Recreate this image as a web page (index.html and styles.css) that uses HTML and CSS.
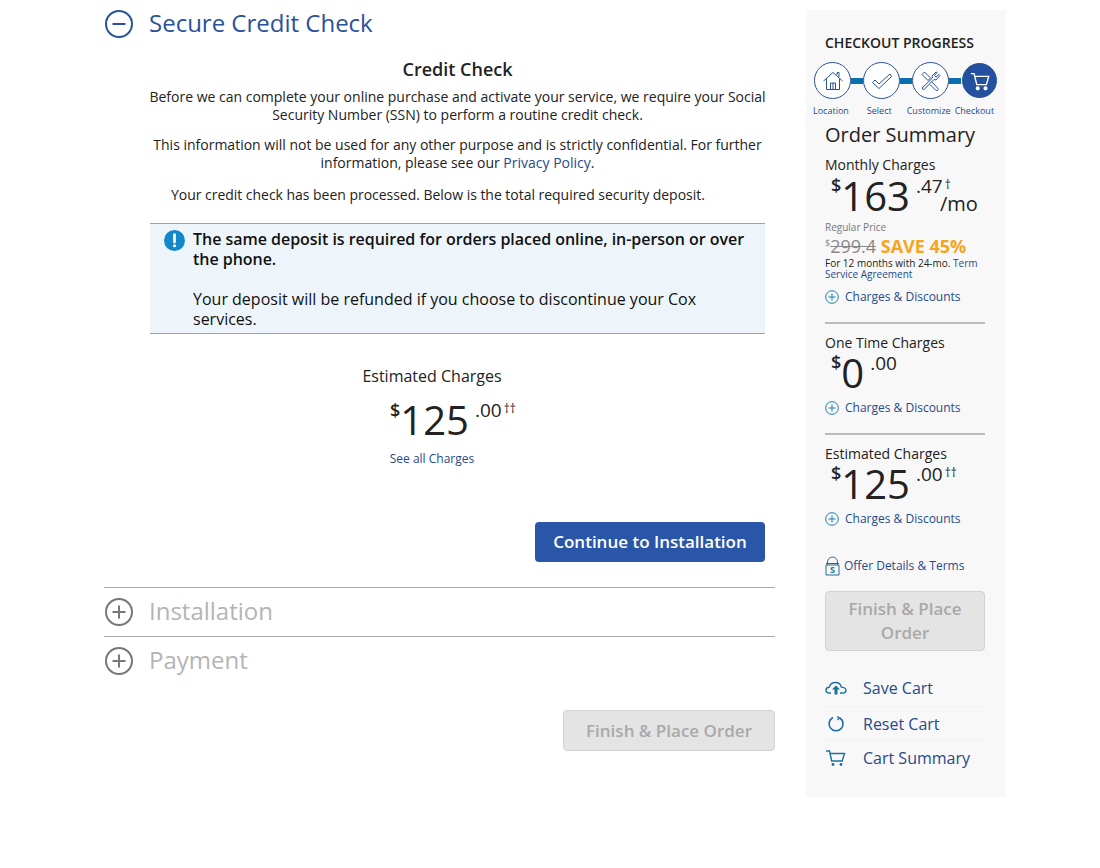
FILE: index.html
```html
<!DOCTYPE html>
<html lang="en">
<head>
  <meta charset="UTF-8">
  <meta name="viewport" content="width=device-width, initial-scale=1.0">
  <title>Secure Credit Check</title>
  <link rel="stylesheet" href="styles.css">
</head>
<body>

  <div class="page">
    <div class="main">
      <div class="section-head open">
        <svg class="toggle" viewBox="0 0 28 28"><circle cx="14" cy="14" r="13" /><path d="M7.5 14h13" /></svg>
        <h1>Secure Credit Check</h1>
      </div>

      <div class="section-body">
        <h2>Credit Check</h2>
        <p class="intro">Before we can complete your online purchase and activate your service, we require your Social Security Number (SSN) to perform a routine credit check.</p>
        <p class="intro second">This information will not be used for any other purpose and is strictly confidential. For further information, please see our <a href="#">Privacy Policy</a>.</p>
        <p class="processed">Your credit check has been processed. Below is the total required security deposit.</p>

        <div class="alert">
          <svg class="alert-icon" viewBox="0 0 20 20"><circle cx="10" cy="10" r="10" fill="#1487c9" /><path d="M10 4.5v7" stroke="#fff" stroke-width="2.6" stroke-linecap="round" /><circle cx="10" cy="15" r="1.5" fill="#fff" /></svg>
          <div class="alert-text">
            <strong>The same deposit is required for orders placed online, in-person or over the phone.</strong>
            <p>Your deposit will be refunded if you choose to discontinue your Cox services.</p>
          </div>
        </div>

        <div class="estimate">
          <div class="estimate-label">Estimated Charges</div>
          <div class="price big"><span class="cur">$</span><span class="whole">125</span><span class="cents">.00</span><span class="mark">††</span></div>
          <a class="see-all" href="#">See all Charges</a>
        </div>

        <div class="continue-row">
          <button class="continue" type="button">Continue to Installation</button>
        </div>
      </div>

      <div class="section-head closed first">
        <svg class="toggle" viewBox="0 0 28 28"><circle cx="14" cy="14" r="13" /><path d="M7.5 14h13M14 7.5v13" /></svg>
        <h1>Installation</h1>
      </div>
      <div class="section-head closed">
        <svg class="toggle" viewBox="0 0 28 28"><circle cx="14" cy="14" r="13" /><path d="M7.5 14h13M14 7.5v13" /></svg>
        <h1>Payment</h1>
      </div>

      <div class="finish-row">
        <button class="finish" type="button" disabled>Finish &amp; Place Order</button>
      </div>
    </div>

    <div class="sidebar">
      <div class="progress-title">CHECKOUT PROGRESS</div>
      <div class="steps">
        <div class="step">
          <svg viewBox="0 0 24 24"><path d="M2.5 12 12 3.5l9.5 8.5M5.5 10v10.5h13V10M9.5 20.5V14h5v6.5M12 14v6.5M16 6V3.500h2V8" /></svg>
        </div>
        <span class="link-bar"></span>
        <div class="step">
          <svg viewBox="0 0 24 24"><path d="M2.500 13.500 5 11l4 4L20 5l1.500 2.500L9 19.500z" /></svg>
        </div>
        <span class="link-bar"></span>
        <div class="step">
          <svg viewBox="0 0 24 24"><path d="M3 19l1.500 2L15 10.500l2 .5 4-4.500-1-1-3 2.500-1.500-1.500 2.500-3-1-.5-4 4 .5 2zM3 5.500 5.500 3l6 6-2.500 2.500zM13 13l6 6.500a1.500 1.500 0 0 1-2 2L11 15.500" /></svg>
        </div>
        <span class="link-bar"></span>
        <div class="step current">
          <svg viewBox="0 0 24 24"><path d="M2 4h3.500l3 12h10.500L21.500 7H6.500" /><circle cx="9.5" cy="20" r="1.5" fill="#fff" /><circle cx="18" cy="20" r="1.5" fill="#fff" /></svg>
        </div>
      </div>
      <div class="step-labels">
        <span>Location</span><span>Select</span><span>Customize</span><span>Checkout</span>
      </div>

      <div class="summary-title">Order Summary</div>

      <div class="charge-label">Monthly Charges</div>
      <div class="price side monthly"><span class="cur">$</span><span class="whole">163</span><span class="cents-col"><span class="cents-top"><span class="cents">.47</span><span class="mark">†</span></span><span class="per">/mo</span></span></div>
      <div class="regular">Regular Price</div>
      <div class="was"><span class="was-cur">$</span><s>299.4</s> <span class="save">SAVE 45%</span></div>
      <div class="terms">For 12 months with 24-mo. <a href="#">Term Service Agreement</a></div>
      <a class="charges-link" href="#"><svg viewBox="0 0 14 14"><circle cx="7" cy="7" r="6.3" /><path d="M3.5 7h7M7 3.5v7" /></svg>Charges &amp; Discounts</a>

      <div class="block">
        <div class="charge-label">One Time Charges</div>
        <div class="price side"><span class="cur">$</span><span class="whole">0</span><span class="cents">.00</span></div>
        <a class="charges-link" href="#"><svg viewBox="0 0 14 14"><circle cx="7" cy="7" r="6.3" /><path d="M3.5 7h7M7 3.5v7" /></svg>Charges &amp; Discounts</a>
      </div>

      <div class="block">
        <div class="charge-label">Estimated Charges</div>
        <div class="price side"><span class="cur">$</span><span class="whole">125</span><span class="cents">.00</span><span class="mark">††</span></div>
        <a class="charges-link" href="#"><svg viewBox="0 0 14 14"><circle cx="7" cy="7" r="6.3" /><path d="M3.5 7h7M7 3.5v7" /></svg>Charges &amp; Discounts</a>
      </div>

      <a class="offer" href="#">
        <svg viewBox="0 0 15 20"><path d="M2.5 9V6a5 5 0 0 1 10 0v3M1 9h13v10H1zM1 7.5h13" /><text x="7.5" y="17" text-anchor="middle">S</text></svg>
        Offer Details &amp; Terms
      </a>

      <button class="side-finish" type="button" disabled>Finish &amp; Place Order</button>

      <a class="cart-link save-cart" href="#">
        <span class="cart-icon"><svg viewBox="0 0 22 14"><path d="M6 12H4.5C2.5 12 1 10.8 1 9.3 1 7.5 2.5 6.3 4.2 6.3 5 3.5 7.5 1.5 10.5 1.5c3 0 5.3 2 5.8 4.6 2.5 0 4.7 1.3 4.7 3.2 0 1.7-1.7 2.7-3.5 2.7H15" /><path d="M7 8.5 11 4.5l4 4h-2.500v5h-3v-5z" class="solid" /></svg></span>
        Save Cart
      </a>
      <a class="cart-link reset-cart" href="#">
        <span class="cart-icon"><svg viewBox="0 0 22 18"><path d="M8 2.5a7 7 0 1 0 7 .5" stroke-width="1.6" /><path d="M12 1.5 14.500 3 12.500 5" /></svg></span>
        Reset Cart
      </a>
      <a class="cart-link last" href="#">
        <span class="cart-icon"><svg viewBox="0 0 22 18"><path d="M1 2h3.500l2.200 10h10.500L19.500 4.500H5" /><circle cx="8" cy="15.5" r="1.4" class="solid" /><circle cx="16" cy="15.5" r="1.4" class="solid" /></svg></span>
        Cart Summary
      </a>
    </div>
  </div>

</body>
</html>
```

FILE: styles.css
```css
body {
  font-family: "Open Sans", Arial, sans-serif;
  margin: 0;
  padding: 0;
  background-color: #fff;
  color: #222;
}
a {
  color: #264a8c;
  text-decoration: none;
}
.page {
  display: flex;
  align-items: flex-start;
  padding: 0 0 0 104px;
}
.main {
  width: 671px;
  margin-right: 31px;
}

/* accordion headers */
.section-head {
  display: flex;
  align-items: center;
  height: 48px;
}
.section-head h1 {
  margin: 0 0 2px 16px;
  font-size: 24px;
  font-weight: 400;
  line-height: 46px;
  color: #2a5299;
}
.section-head.closed {
  border-top: 1px solid #aaa;
}
.section-head.closed h1 {
  color: #b4b4b4;
}
.toggle {
  width: 28px;
  height: 28px;
  margin-left: 1px;
  fill: none;
  stroke: #2a5299;
  stroke-width: 2;
}
.closed .toggle {
  stroke: #777;
}

/* credit check body */
.section-body {
  width: 615px;
  margin-left: 46px;
  padding-top: 9px;
}
h2 {
  margin: 0;
  text-align: center;
  font-size: 18px;
  font-weight: 600;
  line-height: 24px;
  color: #222;
}
.intro {
  margin: 7px -5px 0 -5px;
  text-align: center;
  font-size: 14px;
  line-height: 17.5px;
}
.intro.second {
  margin: 13px 0 0 0;
}
.processed {
  margin: 15px 0 0 21px;
  font-size: 14px;
  line-height: 18px;
  letter-spacing: -0.03px;
}
.alert {
  display: flex;
  margin-top: 19px;
  padding: 5px 14px 4px 14px;
  background-color: #edf5fa;
  border-top: 1px solid #6db3cf;
  border-bottom: 1px solid #6db3cf;
}
.alert-icon {
  flex: none;
  width: 21px;
  height: 21px;
  margin: 1px 8px 0 0;
}
.alert-text {
  font-size: 16px;
  line-height: 20px;
  color: #111;
}
.alert-text strong {
  font-weight: 600;
  letter-spacing: -0.03px;
}
.alert-text p {
  margin: 20px 0 0 0;
}
.estimate {
  width: 200px;
  margin: 31px 0 0 182px;
  text-align: center;
}
.estimate-label {
  font-size: 16px;
  line-height: 22px;
}
.see-all {
  display: block;
  font-size: 12px;
  line-height: 16px;
  margin-top: 5px;
}

/* prices */
.price {
  display: flex;
  align-items: flex-start;
  color: #222;
}
.price .cur {
  font-size: 18px;
  font-weight: 600;
  line-height: 24px;
  margin-top: 3px;
}
.price .whole {
  font-size: 40px;
  line-height: 52px;
}
.price .cents {
  font-size: 19px;
  line-height: 24px;
  margin: 4px 0 0 6px;
}
.price .mark {
  font-size: 12px;
  line-height: 16px;
  margin: 7px 0 0 2px;
}
.price.big {
  padding-left: 58px;
  margin-top: 7px;
}
.big .cur {
  margin-top: 4px;
}
.price.side {
  padding-left: 6px;
  margin-top: -5px;
  margin-bottom: -7px;
}
.price.monthly {
  margin-top: -4px;
  margin-bottom: -2px;
}
.monthly .cents-col {
  display: flex;
  flex-direction: column;
}
.monthly .cents-top {
  display: flex;
  height: 21px;
}
.monthly .per {
  font-size: 20px;
  line-height: 26px;
  margin: 0 0 0 30px;
}

.continue-row {
  display: flex;
  justify-content: flex-end;
  margin-top: 55px;
}
.continue {
  width: 230px;
  height: 40px;
  padding-bottom: 3px;
  border: none;
  border-radius: 4px;
  background-color: #2a56a8;
  color: #fff;
  font-family: inherit;
  font-size: 17px;
  font-weight: 600;
}
.section-body + .first {
  margin-top: 25px;
}
.finish-row {
  display: flex;
  justify-content: flex-end;
  margin-top: 25px;
}
.finish {
  width: 212px;
  height: 41px;
  padding-bottom: 2px;
  border: 1px solid #d2d2d2;
  border-radius: 4px;
  background-color: #e4e4e4;
  color: #a9a9a9;
  font-family: inherit;
  font-size: 17px;
  font-weight: 600;
}

/* sidebar */
.sidebar {
  box-sizing: border-box;
  width: 200px;
  height: 787px;
  margin-top: 10px;
  padding: 24px 21px 0 19px;
  background-color: #f8f8f8;
}
.progress-title {
  font-size: 14px;
  font-weight: 600;
  line-height: 18px;
  color: #222;
}
.steps {
  display: flex;
  align-items: center;
  margin: 10px 0 0 -11px;
}
.step {
  box-sizing: border-box;
  display: flex;
  align-items: center;
  justify-content: center;
  flex: none;
  width: 37px;
  height: 37px;
  border: 1px solid #2a5299;
  border-radius: 50%;
  background-color: #fff;
}
.step svg {
  width: 24px;
  height: 24px;
  fill: none;
  stroke: #2a5299;
  stroke-width: 1;
}
.step.current {
  width: 35px;
  height: 35px;
  margin-left: 1px;
  background-color: #23509f;
}
.step.current svg {
  width: 22px;
  height: 22px;
  stroke: #fff;
  stroke-width: 1.5;
}
.link-bar {
  flex: none;
  width: 12px;
  height: 6px;
  background-color: #0a6fae;
}
.step-labels {
  display: flex;
  margin: 6px 0 0 -12px;
  font-size: 9px;
  line-height: 12px;
  white-space: nowrap;
  color: #264a8c;
}
.step-labels span + span {
  margin-left: 15px;
}
.step-labels span:nth-child(2) {
  margin-left: 18px;
}
.step-labels span:nth-child(4) {
  margin-left: 4px;
}
.summary-title {
  margin-top: 4px;
  font-size: 20px;
  line-height: 28px;
  color: #222;
}
.charge-label {
  font-size: 14px;
  line-height: 18px;
  color: #222;
}
.summary-title + .charge-label {
  margin-top: 7px;
}
.regular {
  font-size: 10px;
  line-height: 14px;
  color: #777;
}
.was {
  margin-top: 1px;
  font-size: 18px;
  line-height: 23px;
  color: #888;
}
.was-cur {
  font-size: 9px;
  vertical-align: top;
  line-height: 16px;
}
.save {
  font-weight: 700;
  font-size: 18px;
  color: #f7a51e;
}
.terms {
  font-size: 10px;
  line-height: 11px;
  color: #222;
}
.charges-link {
  display: flex;
  align-items: center;
  margin-top: 9px;
  font-size: 12px;
  line-height: 16px;
}
.charges-link svg {
  width: 14px;
  height: 14px;
  margin-right: 6px;
  fill: none;
  stroke: #1c7fb0;
  stroke-width: 1;
}
.block {
  margin-top: 17px;
  padding-top: 10px;
  border-top: 2px solid #bbb;
}
.block .charges-link {
  margin-top: 8px;
}
.offer {
  display: flex;
  align-items: center;
  margin-top: 29px;
  font-size: 12px;
  line-height: 18px;
}
.offer svg {
  width: 15px;
  height: 20px;
  margin-right: 4px;
  fill: none;
  stroke: #1c6f9f;
  stroke-width: 1;
}
.offer text {
  font-size: 9px;
  font-weight: 700;
  fill: #1c6f9f;
  stroke: none;
}
.side-finish {
  display: block;
  width: 160px;
  height: 60px;
  margin-top: 15px;
  border: 1px solid #d2d2d2;
  border-radius: 4px;
  background-color: #e4e4e4;
  color: #a9a9a9;
  font-family: inherit;
  font-size: 17px;
  font-weight: 600;
  line-height: 24px;
}
.cart-link {
  display: flex;
  align-items: center;
  height: 34px;
  font-size: 16px;
  color: #264a8c;
}
.save-cart {
  margin-top: 19px;
  height: 36px;
}
.reset-cart {
  height: 33px;
  border-top: 1px solid #f3f3f3;
  border-bottom: 1px solid #f3f3f3;
}
.cart-link.last {
  height: 33px;
}
.cart-icon {
  display: flex;
  width: 38px;
}
.cart-icon svg {
  width: 22px;
  height: 18px;
  fill: none;
  stroke: #1c6f9f;
  stroke-width: 1.4;
}
.cart-icon .solid {
  fill: #1c6f9f;
  stroke: none;
}
```
